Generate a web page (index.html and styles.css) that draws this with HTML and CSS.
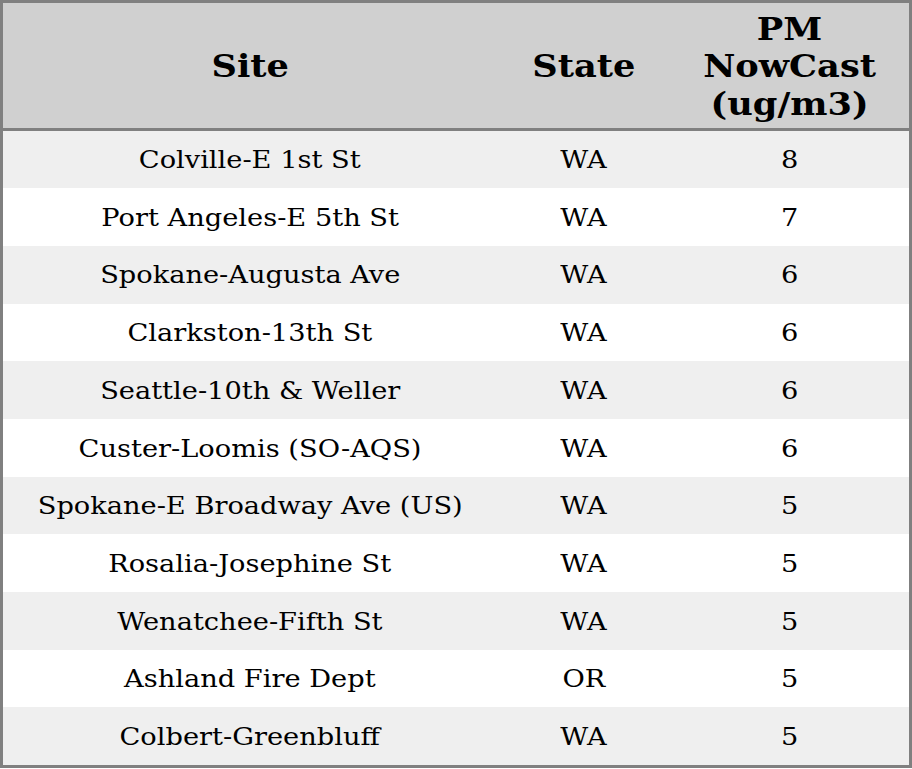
FILE: index.html
```html
<!DOCTYPE html>
<html>
<head>
<meta charset="utf-8">
<link rel="stylesheet" href="styles.css">
</head>
<body>
<table class="aq">
  <colgroup>
    <col class="c-site">
    <col class="c-state">
    <col class="c-pm">
  </colgroup>
  <thead>
    <tr><th><span class="w">Site</span></th><th><span class="w">State</span></th><th><span class="w">PM<br>NowCast<br>(ug/m3)</span></th></tr>
  </thead>
  <tbody>
    <tr><td><span class="w">Colville-E 1st St</span></td><td><span class="w">WA</span></td><td><span class="w">8</span></td></tr>
    <tr><td><span class="w">Port Angeles-E 5th St</span></td><td><span class="w">WA</span></td><td><span class="w">7</span></td></tr>
    <tr><td><span class="w">Spokane-Augusta Ave</span></td><td><span class="w">WA</span></td><td><span class="w">6</span></td></tr>
    <tr><td><span class="w">Clarkston-13th St</span></td><td><span class="w">WA</span></td><td><span class="w">6</span></td></tr>
    <tr><td><span class="w">Seattle-10th &amp; Weller</span></td><td><span class="w">WA</span></td><td><span class="w">6</span></td></tr>
    <tr><td><span class="w">Custer-Loomis (SO-AQS)</span></td><td><span class="w">WA</span></td><td><span class="w">6</span></td></tr>
    <tr><td><span class="w">Spokane-E Broadway Ave (US)</span></td><td><span class="w">WA</span></td><td><span class="w">5</span></td></tr>
    <tr><td><span class="w">Rosalia-Josephine St</span></td><td><span class="w">WA</span></td><td><span class="w">5</span></td></tr>
    <tr><td><span class="w">Wenatchee-Fifth St</span></td><td><span class="w">WA</span></td><td><span class="w">5</span></td></tr>
    <tr><td><span class="w">Ashland Fire Dept</span></td><td><span class="w">OR</span></td><td><span class="w">5</span></td></tr>
    <tr><td><span class="w">Colbert-Greenbluff</span></td><td><span class="w">WA</span></td><td><span class="w">5</span></td></tr>
  </tbody>
</table>
</body>
</html>
```
FILE: styles.css
```css
html, body {
  margin: 0;
  padding: 0;
  background: #ffffff;
}
.aq {
  width: 912px;
  border-collapse: collapse;
  border: 3px solid #808080;
  font-family: "DejaVu Serif", serif;
  color: #000;
  table-layout: fixed;
}
.c-site { width: 494px; }
.c-state { width: 172px; }
.c-pm { width: 240px; }
.w {
  display: inline-block;
  transform-origin: 50% 50%;
}
.aq th {
  background: #d0d0d0;
  font-size: 32px;
  font-weight: bold;
  line-height: 37.5px;
  padding: 7.5px 0 4.5px;
  text-align: center;
  border-bottom: 3px solid #808080;
}
.aq th .w {
  transform: scaleX(1.1);
}
.aq td {
  font-size: 24px;
  line-height: 28px;
  padding: 15.6px 0 14.1px;
  text-align: center;
}
.aq td .w {
  transform: scaleX(1.135);
}
.aq tbody tr:nth-child(odd) td {
  background: #efefef;
}
```
